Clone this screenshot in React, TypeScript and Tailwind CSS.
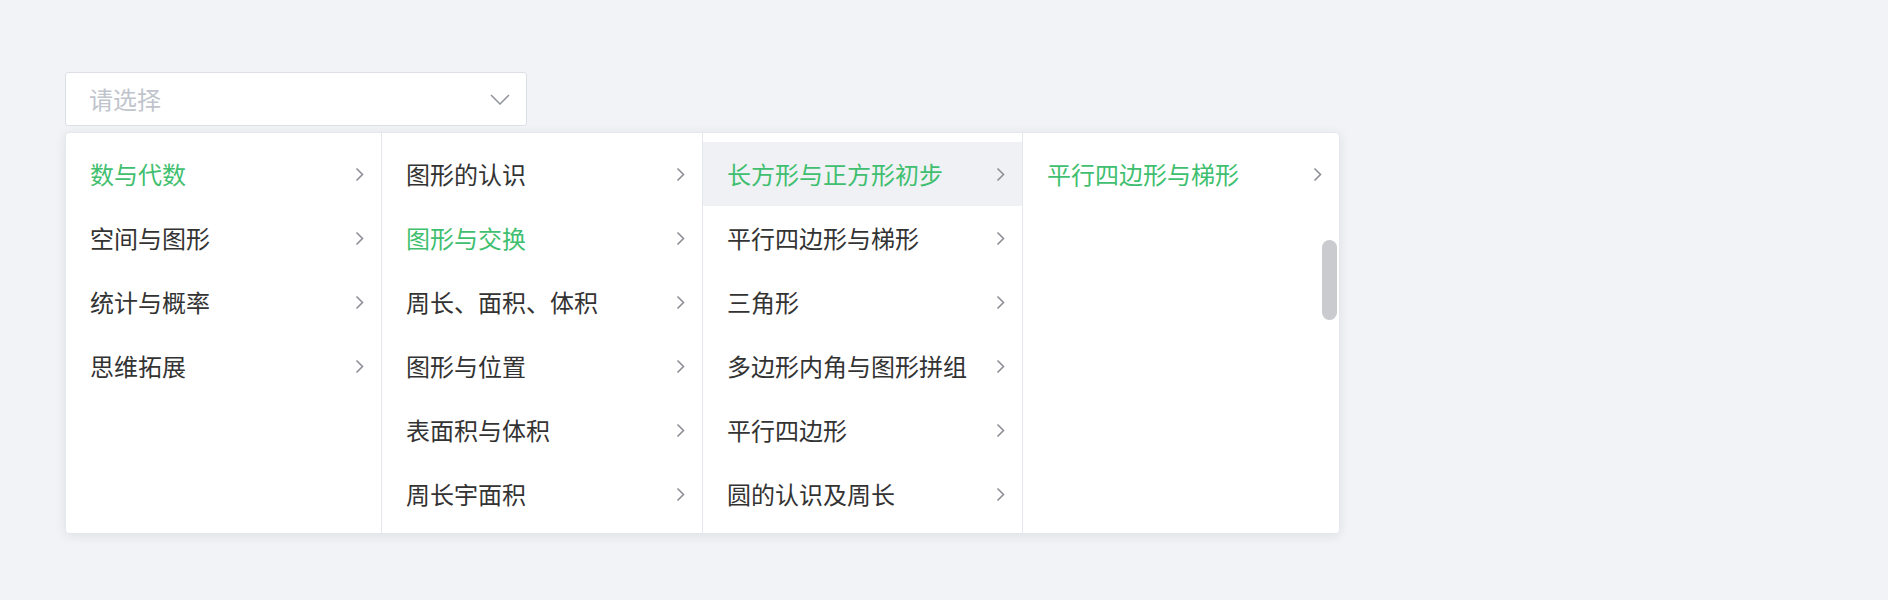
import { useState } from "react";

const columns = [
  {
    width: "w-[315px]",
    items: ["数与代数", "空间与图形", "统计与概率", "思维拓展"],
    active: 0,
  },
  {
    width: "w-[321px] border-l border-[#e4e7ed]",
    items: ["图形的认识", "图形与交换", "周长、面积、体积", "图形与位置", "表面积与体积", "周长宇面积"],
    active: 1,
  },
  {
    width: "w-[320px] border-l border-[#e4e7ed]",
    items: ["长方形与正方形初步", "平行四边形与梯形", "三角形", "多边形内角与图形拼组", "平行四边形", "圆的认识及周长"],
    active: 0,
    hover: 0,
  },
  {
    width: "flex-1 border-l border-[#e4e7ed] relative",
    items: ["平行四边形与梯形"],
    active: 0,
    scrollbar: true,
  },
];

function ChevronRight() {
  return (
    <svg width="9" height="15" viewBox="0 0 9 15" fill="none">
      <path d="M1.5 1.5L7.5 7.5L1.5 13.5" stroke="#8c8f96" strokeWidth="1.6" />
    </svg>
  );
}

function ChevronDown() {
  return (
    <svg width="20" height="11" viewBox="0 0 20 11" fill="none">
      <path d="M1 1L10 10L19 1" stroke="#909399" strokeWidth="1.5" />
    </svg>
  );
}

export default function App() {
  const [open] = useState(true);

  return (
    <div className="min-h-[600px] bg-[#f2f3f7] pl-[65px] pt-[72px] font-['Noto_Sans_CJK_SC',sans-serif]">
      {/* SELECT */}
      <div className="w-[462px] h-[54px] bg-white border border-[#dcdfe6] rounded-[3px] flex items-center justify-between pl-[23px] pr-[16px]">
        <span className="text-[24px] leading-[32px] text-[#c0c4cc]">请选择</span>
        <ChevronDown />
      </div>

      {/* CASCADER PANEL */}
      {open && (
        <div className="mt-[6px] w-[1275px] h-[402px] flex bg-white border border-[#e4e7ed] rounded-[4px] shadow-[0_2px_12px_rgba(0,0,0,0.08)] overflow-hidden">
          {columns.map((col, ci) => (
            <div key={ci} className={`${col.width} pt-[9px]`}>
              {col.items.map((item, i) => (
                <div
                  key={item}
                  className={`h-[64px] flex items-center justify-between pl-[24px] pr-[17px] ${
                    col.hover === i ? "bg-[#f0f1f5]" : ""
                  }`}
                >
                  <span
                    className={`text-[24px] leading-[32px] ${
                      col.active === i ? "text-[#3fbf6f]" : "text-[#333333]"
                    }`}
                  >
                    {item}
                  </span>
                  <ChevronRight />
                </div>
              ))}
              {col.scrollbar && (
                <div className="absolute right-[2px] top-[107px] w-[15px] h-[80px] rounded-full bg-[#cacbcf]" />
              )}
            </div>
          ))}
        </div>
      )}
    </div>
  );
}
